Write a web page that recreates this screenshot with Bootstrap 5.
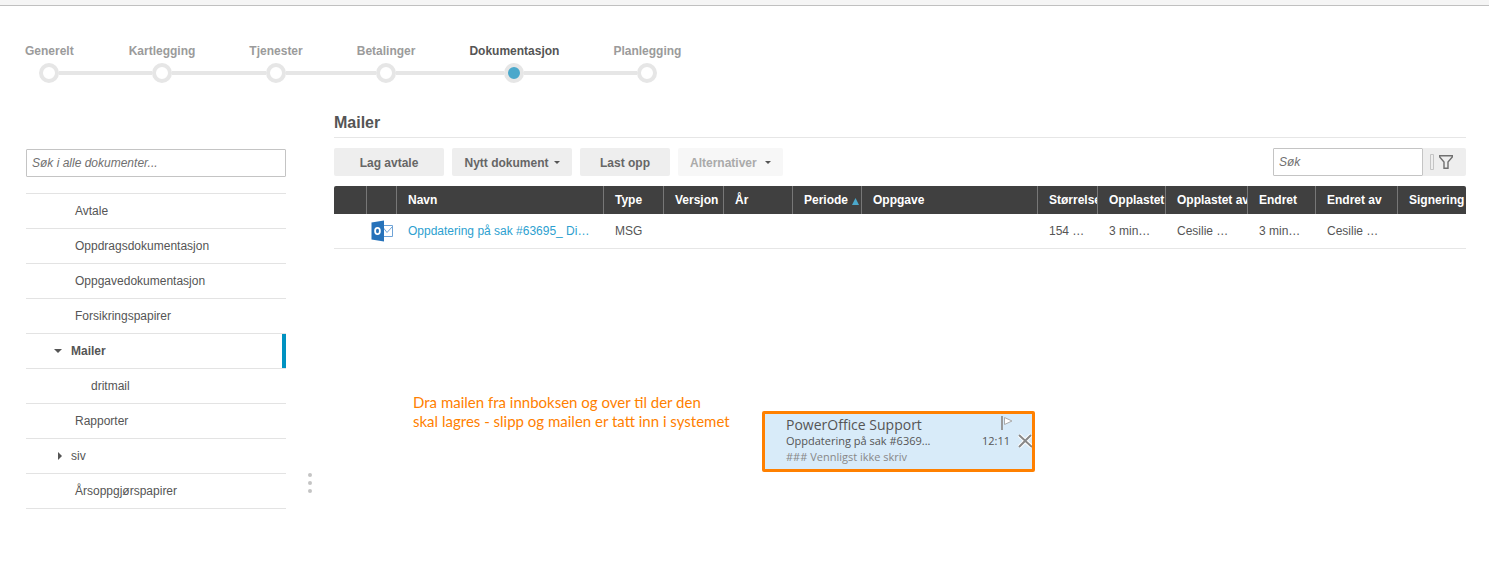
<!DOCTYPE html>
<html lang="no">
<head>
<meta charset="utf-8">
<meta name="viewport" content="width=device-width, initial-scale=1">
<title>Dokumentasjon – Mailer</title>
<link rel="stylesheet" href="https://cdn.jsdelivr.net/npm/bootstrap@5.3.0/dist/css/bootstrap.min.css">
<style>
  body { font: 12px/18px "Liberation Sans", Arial, sans-serif; color: #555; background: #fff; }
  a { color: inherit; text-decoration: none; }
  .topstrip { height: 6px; background: #f5f5f5; border-bottom: 1px solid #c0c0c0; }

  /* Wizard steps */
  .steps { padding: 36px 0 0; margin: 0 0 0 -3px; }
  .step a { display: block; padding: 0 27px; font-weight: bold; color: #9b9b9b; }
  .step:first-child a { padding: 0 28px; }
  .step.current a { color: #555; }
  .track { height: 20px; margin-top: 3px; }
  .rail { height: 4px; background: #e6e6e6; flex: 1 1 0; }
  .step:first-child .rail:first-child, .step:last-child .rail:last-child { visibility: hidden; }
  .knob { width: 20px; height: 20px; border: 4px solid #e6e6e6; border-radius: 50%; background: #fff; }
  .current .knob { background: #4ba8cb; }

  .workspace { padding: 27px 23px 0 26px; }

  /* Folder tree */
  .folders { width: 260px; padding-top: 39px; }
  .field { height: 28px; padding: 0 5px; border: 1px solid #c4c4c4; border-radius: 1px; font-size: 12px; color: #555; background: #fff; }
  .field::placeholder { font-style: italic; color: #707070; opacity: 1; }
  .tree { margin-top: 16px; border-top: 1px solid #e3e3e3; }
  .tree a { height: 35px; padding-left: 49px; border-bottom: 1px solid #e3e3e3; }
  .tree a.branch { padding-left: 28px; }
  .tree a.nested { padding-left: 65px; }
  .tree a.chosen { font-weight: bold; background: linear-gradient(#0092c1, #0092c1) right / 4px 100% no-repeat content-box; }
  .twist { width: 17px; }
  .splitter { width: 48px; padding-bottom: 16px; gap: 4px; }
  .splitter span { width: 4px; height: 4px; border-radius: 50%; background: #c4c4c4; }

  /* Document list */
  .docs h1 { font-size: 16px; line-height: 24px; font-weight: bold; margin: 0; padding: 1px 0 2px; border-bottom: 1px solid #e6e6e6; }
  .tools { padding: 10px 0; }
  .tool { height: 28px; padding: 2px 0 0; border: 0; border-radius: 2px; background: #eee; color: #666; font-size: 12px; line-height: 18px; font-weight: bold; }
  .tool:disabled { background: #f7f7f7; color: #aaa; opacity: 1; }
  .tool .drop { margin-left: 5px; vertical-align: 1px; }
  .w-a { width: 110px; } .w-b { width: 120px; } .w-c { width: 90px; } .w-d { width: 105px; }
  .filterbtn { width: 43px; padding: 0 0 0 4px; border-radius: 0 2px 2px 0; }
  .finder { width: 150px; }
  .grid { width: 100%; table-layout: fixed; border-collapse: separate; border-spacing: 0; }
  .grid th, .grid td { padding: 0 0 0 11px; overflow: hidden; white-space: nowrap; }
  .grid th { height: 28px; background: #404040; color: #fff; border-right: 1px solid #777; }
  .grid th:last-child { border-right: 0; border-radius: 0 2px 0 0; }
  .grid th:first-child { border-radius: 2px 0 0 0; }
  .grid td { height: 35px; border-bottom: 1px solid #e6e6e6; }
  .grid td.kind { padding-left: 4px; }
  .grid td a { color: #2d9fd0; }
  .c33 { width: 33px; } .c30 { width: 30px; } .c207 { width: 207px; } .c60 { width: 60px; }
  .c68 { width: 68px; } .c69 { width: 69px; } .c82 { width: 82px; }

  /* Drag hint and dragged mail */
  .drag { padding: 144px 0 0 79px; }
  .hint { width: 349px; margin: 0; font: 15px/19px Lato, sans-serif; color: #ff8000; }
  .mail { width: 273px; height: 61px; margin-top: 18px; border: 3px solid #ff8000; border-radius: 2px; background: #d8ebf9; font-family: "Open Sans", sans-serif; font-size: 11px; line-height: 16px; padding: 2px 0 0 21px; color: #555; }
  .mail .from { font-size: 14px; line-height: 17px; }
  .mail .intro { color: #888; line-height: 15px; }
  .mail .flag { margin-right: 19px; }
</style>
</head>
<body>
<div class="topstrip"></div>

<nav aria-label="Trinn">
  <ol class="steps list-unstyled d-flex">
    <li class="step"><a href="#">Generelt</a><div class="track d-flex align-items-center"><i class="rail"></i><i class="knob"></i><i class="rail"></i></div></li>
    <li class="step"><a href="#">Kartlegging</a><div class="track d-flex align-items-center"><i class="rail"></i><i class="knob"></i><i class="rail"></i></div></li>
    <li class="step"><a href="#">Tjenester</a><div class="track d-flex align-items-center"><i class="rail"></i><i class="knob"></i><i class="rail"></i></div></li>
    <li class="step"><a href="#">Betalinger</a><div class="track d-flex align-items-center"><i class="rail"></i><i class="knob"></i><i class="rail"></i></div></li>
    <li class="step current"><a href="#" aria-current="step">Dokumentasjon</a><div class="track d-flex align-items-center"><i class="rail"></i><i class="knob"></i><i class="rail"></i></div></li>
    <li class="step"><a href="#">Planlegging</a><div class="track d-flex align-items-center"><i class="rail"></i><i class="knob"></i><i class="rail"></i></div></li>
  </ol>
</nav>

<div class="workspace d-flex align-items-start">
  <aside class="folders flex-shrink-0">
    <input class="field w-100 d-block" type="text" placeholder="Søk i alle dokumenter..." aria-label="Søk i alle dokumenter">
    <nav class="tree" aria-label="Mapper">
      <a class="d-flex align-items-center" href="#">Avtale</a>
      <a class="d-flex align-items-center" href="#">Oppdragsdokumentasjon</a>
      <a class="d-flex align-items-center" href="#">Oppgavedokumentasjon</a>
      <a class="d-flex align-items-center" href="#">Forsikringspapirer</a>
      <a class="branch chosen d-flex align-items-center" href="#"><svg class="twist" width="17" height="8" viewBox="0 0 17 8"><path d="M0 2h8L4 6z" fill="#555"/></svg>Mailer</a>
      <a class="nested d-flex align-items-center" href="#">dritmail</a>
      <a class="d-flex align-items-center" href="#">Rapporter</a>
      <a class="branch d-flex align-items-center" href="#"><svg class="twist" width="17" height="8" viewBox="0 0 17 8"><path d="M4 0v8l4-4z" fill="#555"/></svg>siv</a>
      <a class="d-flex align-items-center" href="#">Årsoppgjørspapirer</a>
    </nav>
  </aside>
  <div class="splitter flex-shrink-0 align-self-end d-flex flex-column align-items-center"><span></span><span></span><span></span></div>

  <main class="docs flex-grow-1">
    <h1>Mailer</h1>
    <div class="tools d-flex gap-2">
      <button class="btn tool w-a" type="button">Lag avtale</button>
      <button class="btn tool w-b" type="button">Nytt dokument<svg class="drop" width="6" height="8" viewBox="0 0 6 8"><path d="M0 3h6L3 6z" fill="#555"/></svg></button>
      <button class="btn tool w-c" type="button">Last opp</button>
      <button class="btn tool w-d" type="button" disabled>Alternativer <svg class="drop" width="6" height="8" viewBox="0 0 6 8"><path d="M0 3h6L3 6z" fill="#555"/></svg></button>
      <div class="ms-auto d-flex">
        <input class="field finder" type="text" placeholder="Søk" aria-label="Søk">
        <button class="btn tool filterbtn d-flex align-items-center" type="button" aria-label="Filter"><svg width="26" height="18" viewBox="0 0 26 18" fill="none"><path d="M3.500 1.500h3v15h-3z" stroke="#c4c4c4"/><path d="M12.700 2.700H25.300V4L21 9v6.300H17V9L12.700 4z" stroke="#707070" stroke-width="1.400"/></svg></button>
      </div>
    </div>
    <table class="grid">
      <colgroup><col class="c33"><col class="c30"><col class="c207"><col class="c60"><col class="c60"><col class="c69"><col class="c69"><col><col class="c60"><col class="c68"><col class="c82"><col class="c68"><col class="c82"><col class="c68"></colgroup>
      <thead>
        <tr><th></th><th></th><th>Navn</th><th>Type</th><th>Versjon</th><th>År</th><th>Periode <svg width="8" height="8" viewBox="0 0 8 8"><path d="M1 8h7L4.500 1z" fill="#4ba8cb"/></svg></th><th>Oppgave</th><th>Størrelse</th><th>Opplastet</th><th>Opplastet av</th><th>Endret</th><th>Endret av</th><th>Signering</th></tr>
      </thead>
      <tbody>
        <tr>
          <td></td>
          <td class="kind"><svg class="d-block" width="23" height="22" viewBox="0 0 23 22"><path d="M12 5.500h9.500v11H12M12.500 8l3.500 4.500 5.500-6" fill="#fff" stroke="#6fa3d6"/><path d="M0.500 2.500L13 .5v21L0.500 19.500z" fill="#2672ba"/><ellipse cx="6.500" cy="11" rx="2.400" ry="3.200" fill="none" stroke="#fff" stroke-width="1.800"/></svg></td>
          <td><a href="#">Oppdatering på sak #63695_ Di…</a></td>
          <td>MSG</td><td></td><td></td><td></td><td></td>
          <td>154 …</td><td>3 min…</td><td>Cesilie …</td><td>3 min…</td><td>Cesilie …</td><td></td>
        </tr>
      </tbody>
    </table>

    <div class="drag d-flex align-items-start">
      <p class="hint flex-shrink-0">Dra mailen fra innboksen og over til der den<br>skal lagres - slipp og mailen er tatt inn i systemet</p>
      <article class="mail flex-shrink-0">
        <div class="from d-flex justify-content-between align-items-start">PowerOffice Support<svg class="flag" width="12" height="15" viewBox="0 0 12 15"><path d="M1 0v14" stroke="#999" stroke-width="2"/><path d="M3.500 1.500v7L11 5z" fill="#fff" stroke="#aaa"/></svg></div>
        <div class="d-flex align-items-center"><span class="me-auto">Oppdatering på sak #6369...</span><span class="me-2">12:11</span><svg width="14" height="14" viewBox="0 0 14 14"><path d="M1 1l13 12M13 1L1 13" stroke="#fff" stroke-width="4"/><path d="M1 1l13 12M13 1L1 13" stroke="#888" stroke-width="2"/></svg></div>
        <div class="intro">### Vennligst ikke skriv</div>
      </article>
    </div>
  </main>
</div>
<script src="https://cdn.jsdelivr.net/npm/bootstrap@5.3.0/dist/js/bootstrap.bundle.min.js"></script>
</body>
</html>
